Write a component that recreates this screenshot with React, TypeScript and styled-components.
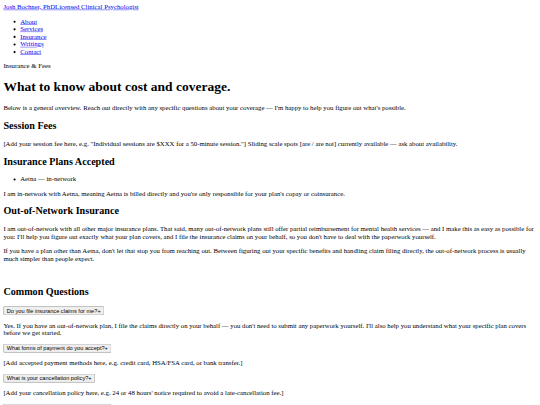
import React from "react";
import styled, { createGlobalStyle } from "styled-components";

// The page is a plain, unstyled document laid out at 1280px and shown at 540px.
const GlobalStyle = createGlobalStyle`
  html, body {
    margin: 0;
    overflow: hidden;
    background: #fff;
  }
`;

const Page = styled.div`
  box-sizing: border-box;
  width: 1280px;
  padding: 8px;
  transform: scale(0.421875);
  transform-origin: 0 0;
  color: #000;
  font-family: "Liberation Serif", "Times New Roman", serif;
  font-size: 16px;
`;

const Header = styled.header``;

const BrandLink = styled.a`
  color: #0000ee;
  text-decoration: underline;
`;

const NavList = styled.ul`
  margin: 16px 0;
  padding-left: 40px;
  list-style: disc;
`;

const NavLink = styled.a`
  color: #0000ee;
  text-decoration: underline;
`;

const Main = styled.main``;

const Eyebrow = styled.p`
  margin: 16px 0;
`;

const Title = styled.h1`
  font-size: 32px;
  font-weight: bold;
  margin: 21.44px 0;
`;

const Text = styled.p`
  margin: 16px 0;
`;

const Section = styled.section<{ $spaced?: boolean }>`
  margin-top: ${(p) => (p.$spaced ? "57px" : "0")};
`;

const SectionTitle = styled.h2`
  font-size: 24px;
  font-weight: bold;
  margin: 19.92px 0;
`;

const PlanList = styled.ul`
  margin: 16px 0;
  padding-left: 40px;
`;

const FaqItem = styled.div``;

const FaqButton = styled.button`
  font-family: "Liberation Sans", Arial, sans-serif;
  font-size: 13.333px;
  color: #000;
  padding: 1px 6px;
`;

const Toggle = styled.span``;

const navItems = ["About", "Services", "Insurance", "Writings", "Contact"];

const faqs = [
  {
    q: "Do you file insurance claims for me?",
    a: "Yes. If you have an out-of-network plan, I file the claims directly on your behalf — you don't need to submit any paperwork yourself. I'll also help you understand what your specific plan covers before we get started.",
  },
  {
    q: "What forms of payment do you accept?",
    a: "[Add accepted payment methods here, e.g. credit card, HSA/FSA card, or bank transfer.]",
  },
  {
    q: "What is your cancellation policy?",
    a: "[Add your cancellation policy here, e.g. 24 or 48 hours' notice required to avoid a late-cancellation fee.]",
  },
  {
    q: "Can I use my HSA or FSA card to pay?",
    a: "[Add details about HSA/FSA payments here.]",
  },
];

export default function App() {
  return (
    <Page>
      <GlobalStyle />
      <Header>
        <BrandLink href="#">
          <span>Josh Bochner, PhD</span>
          <span>Licensed Clinical Psychologist</span>
        </BrandLink>
        <nav>
          <NavList>
            {navItems.map((item) => (
              <li key={item}>
                <NavLink href="#">{item}</NavLink>
              </li>
            ))}
          </NavList>
        </nav>
      </Header>
      <Main>
        <Eyebrow>Insurance &amp; Fees</Eyebrow>
        <Title>What to know about cost and coverage.</Title>
        <Text>
          Below is a general overview. Reach out directly with any specific
          questions about your coverage — I'm happy to help you figure out
          what's possible.
        </Text>

        <Section>
          <SectionTitle>Session Fees</SectionTitle>
          <Text>
            [Add your session fee here, e.g. "Individual sessions are $XXX for
            a 50-minute session."] Sliding scale spots [are / are not]
            currently available — ask about availability.
          </Text>
        </Section>

        <Section>
          <SectionTitle>Insurance Plans Accepted</SectionTitle>
          <PlanList>
            <li>Aetna — in-network</li>
          </PlanList>
          <Text>
            I am in-network with Aetna, meaning Aetna is billed directly and
            you're only responsible for your plan's copay or coinsurance.
          </Text>
        </Section>

        <Section>
          <SectionTitle>Out-of-Network Insurance</SectionTitle>
          <Text>
            I am out-of-network with all other major insurance plans. That
            said, many out-of-network plans still offer partial reimbursement
            for mental health services — and I make this as easy as possible
            for you: I'll help you figure out exactly what your plan covers,
            and I file the insurance claims on your behalf, so you don't have
            to deal with the paperwork yourself.
          </Text>
          <Text>
            If you have a plan other than Aetna, don't let that stop you from
            reaching out. Between figuring out your specific benefits and
            handling claim filing directly, the out-of-network process is
            usually much simpler than people expect.
          </Text>
        </Section>

        <Section $spaced>
          <SectionTitle>Common Questions</SectionTitle>
          {faqs.map((f) => (
            <FaqItem key={f.q}>
              <FaqButton type="button">
                {f.q}
                <Toggle>+</Toggle>
              </FaqButton>
              <Text>{f.a}</Text>
            </FaqItem>
          ))}
        </Section>
      </Main>
    </Page>
  );
}
